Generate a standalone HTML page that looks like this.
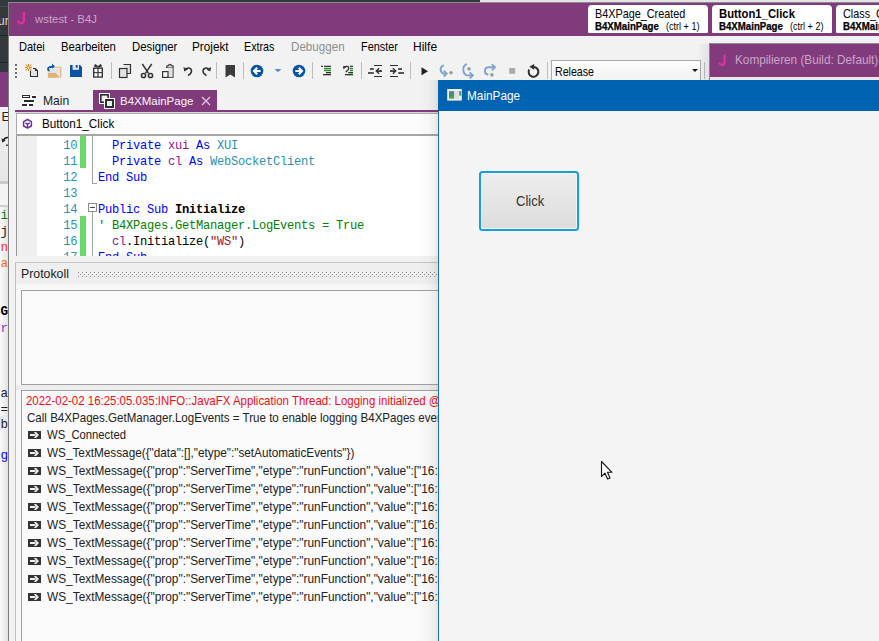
<!DOCTYPE html>
<html><head><meta charset="utf-8">
<style>
*{margin:0;padding:0;box-sizing:border-box}
html,body{width:879px;height:641px;overflow:hidden}
body{position:relative;background:#33383A;font-family:"Liberation Sans",sans-serif;font-size:12px;color:#000}
.a{position:absolute}
.t{position:absolute;white-space:nowrap;line-height:1}
.mono{font-family:"Liberation Mono",monospace;font-size:11.67px}
</style></head><body>
<div class="a" style="left:480px;top:0px;width:399px;height:2px;background:#E4E4E4"></div>
<div class="a" style="left:0px;top:6px;width:8px;height:1px;background:#484C50"></div>
<div class="t" style="left:-2px;top:15px;font-size:12px;color:#D8D8D8">ur</div>
<div class="a" style="left:0px;top:35px;width:8px;height:1px;background:#232629"></div>
<div class="a" style="left:0px;top:62px;width:8px;height:1px;background:#232629"></div>
<div class="a" style="left:0px;top:72px;width:8px;height:35px;background:#813B7D"></div>
<div class="a" style="left:0px;top:107px;width:8px;height:74px;background:linear-gradient(#F0F0F0,#E6E6E6)"></div>
<div class="t" style="left:1.5px;top:111px;font-size:12.5px;color:#222">E</div>
<svg class="a" style="left:0;top:134px" width="8" height="14"><path d="M8 3.6 C6 3.4 4.2 4.6 3.2 6.6" fill="none" stroke="#222" stroke-width="1.5"/><path d="M1.6 4.2 L2.2 8.4 L5.6 6.8 Z" fill="#222"/><rect x="6" y="10.5" width="2" height="1.5" fill="#444"/></svg>
<div class="a" style="left:0px;top:181px;width:8px;height:3px;background:#C9C9C9"></div>
<div class="a" style="left:0px;top:184px;width:8px;height:21px;background:#F4F4F4"></div>
<div class="a" style="left:0px;top:205px;width:8px;height:2px;background:#CFCFCF"></div>
<div class="a" style="left:0px;top:207px;width:8px;height:434px;background:linear-gradient(to right,#FAFAFA,#E2E2E2)"></div>
<div class="a" style="left:0px;top:416px;width:8px;height:14px;background:#E8E8E8"></div>
<div class="t mono" style="left:0.5px;top:210px;font-size:12.6px;color:#008000;">i</div>
<div class="t mono" style="left:0.5px;top:226px;font-size:12.6px;color:#222;">j</div>
<div class="t mono" style="left:0.5px;top:242px;font-size:12.6px;color:#F03010;">n</div>
<div class="t mono" style="left:0.5px;top:258px;font-size:12.6px;color:#F07010;">a</div>
<div class="t mono" style="left:0.5px;top:306px;font-size:12.6px;color:#000;font-weight:bold">G</div>
<div class="t mono" style="left:0.5px;top:323px;font-size:12.6px;color:#9030C0;">r</div>
<div class="t mono" style="left:0.5px;top:388px;font-size:12.6px;color:#222;">a</div>
<div class="t mono" style="left:0.5px;top:404px;font-size:12.6px;color:#222;">=</div>
<div class="t mono" style="left:0.5px;top:419px;font-size:12.6px;color:#222;">b</div>
<div class="t mono" style="left:0.5px;top:450px;font-size:12.6px;color:#0000FF;">g</div>
<div class="a" style="left:8px;top:2px;width:871px;height:639px;background:#F2F2F2;border-left:1px solid #7D7D7D;border-top:1px solid #8A8A8A"></div>
<div class="a" style="left:9px;top:3px;width:870px;height:33px;background:#813B7D"></div>
<svg class="a" style="left:14px;top:9px" width="16" height="18"><path d="M9.9 3 V11 C9.9 13.6 8.6 14.4 6.9 14.4 C5.3 14.4 4.5 13.4 4.2 11.6" fill="none" stroke="#E0309A" stroke-width="2.4"/></svg>
<div class="t" style="left:35px;top:14.19px;font-size:11.59px;color:#C9A5C8;transform:scaleX(0.9819);transform-origin:0 0;">wstest - B4J</div>
<div class="a" style="left:588px;top:5px;width:120px;height:28px;background:#fff;border-radius:4px 4px 1px 1px"></div>
<div class="t" style="left:594.5px;top:6.96px;font-size:13.04px;color:#000;transform:scaleX(0.8310);transform-origin:0 0;">B4XPage_Created</div>
<div class="t" style="left:594.5px;top:22.41px;font-size:10.14px;color:#000;font-weight:bold;transform:scaleX(0.9539);transform-origin:0 0;-webkit-text-stroke:0.25px #000;">B4XMainPage</div>
<div class="t" style="left:665.5px;top:22.43px;font-size:10.00px;color:#000;transform:scaleX(0.9066);transform-origin:0 0;">(ctrl + 1)</div>
<div class="a" style="left:712px;top:5px;width:120px;height:28px;background:#fff;border-radius:4px 4px 1px 1px"></div>
<div class="t" style="left:718.5px;top:6.96px;font-size:13.04px;color:#000;font-weight:bold;transform:scaleX(0.8666);transform-origin:0 0;">Button1_Click</div>
<div class="t" style="left:718.5px;top:22.41px;font-size:10.14px;color:#000;font-weight:bold;transform:scaleX(0.9539);transform-origin:0 0;-webkit-text-stroke:0.25px #000;">B4XMainPage</div>
<div class="t" style="left:789.5px;top:22.43px;font-size:10.00px;color:#000;transform:scaleX(0.9066);transform-origin:0 0;">(ctrl + 2)</div>
<div class="a" style="left:836px;top:5px;width:60px;height:28px;background:#fff;border-radius:4px 4px 1px 1px"></div>
<div class="t" style="left:842.5px;top:6.96px;font-size:13.04px;color:#000;transform:scaleX(0.8312);transform-origin:0 0;">Class_Globals</div>
<div class="t" style="left:842.5px;top:22.41px;font-size:10.14px;color:#000;font-weight:bold;transform:scaleX(0.9539);transform-origin:0 0;-webkit-text-stroke:0.25px #000;">B4XMainPage</div>
<div class="t" style="left:18.6px;top:39.96px;font-size:13.04px;color:#000;transform:scaleX(0.8473);transform-origin:0 0;">Datei</div>
<div class="t" style="left:60.8px;top:39.96px;font-size:13.04px;color:#000;transform:scaleX(0.8686);transform-origin:0 0;">Bearbeiten</div>
<div class="t" style="left:131.5px;top:39.96px;font-size:13.04px;color:#000;transform:scaleX(0.8697);transform-origin:0 0;">Designer</div>
<div class="t" style="left:192px;top:39.96px;font-size:13.04px;color:#000;transform:scaleX(0.9015);transform-origin:0 0;">Projekt</div>
<div class="t" style="left:244.1px;top:39.96px;font-size:13.04px;color:#000;transform:scaleX(0.8251);transform-origin:0 0;">Extras</div>
<div class="t" style="left:290.5px;top:39.96px;font-size:13.04px;color:#8E8E8E;transform:scaleX(0.8920);transform-origin:0 0;">Debuggen</div>
<div class="t" style="left:360.6px;top:39.96px;font-size:13.04px;color:#000;transform:scaleX(0.8345);transform-origin:0 0;">Fenster</div>
<div class="t" style="left:413.4px;top:39.96px;font-size:13.04px;color:#000;transform:scaleX(0.9236);transform-origin:0 0;">Hilfe</div>
<svg class="a" style="left:0;top:0" width="879" height="90" viewBox="0 0 879 90" shape-rendering="geometricPrecision">
 <!-- grip -->
 <g fill="#6E6E6E"><rect x="15" y="64" width="2" height="2"/><rect x="15" y="68" width="2" height="2"/><rect x="15" y="72" width="2" height="2"/><rect x="15" y="76" width="2" height="2"/></g>
 <!-- new -->
 <path d="M30.5 70.8 V76.5 H37.5 V70.8 L35.3 68.5 H33" fill="#E4E4E4" stroke="#2E2E2E" stroke-width="1.1"/>
 <path d="M35 68.3 L37.7 71 H35 Z" fill="#2E2E2E"/>
 <g stroke="#D5841A" stroke-width="1.2"><line x1="28.5" y1="64" x2="28.5" y2="65.8"/><line x1="28.5" y1="69.2" x2="28.5" y2="71"/><line x1="25" y1="67.5" x2="26.8" y2="67.5"/><line x1="30.2" y1="67.5" x2="32" y2="67.5"/></g>
 <g fill="#D5841A"><circle cx="26.2" cy="65.2" r="0.7"/><circle cx="30.8" cy="65.2" r="0.7"/><circle cx="26.2" cy="69.8" r="0.7"/><circle cx="30.8" cy="69.8" r="0.7"/></g>
 <circle cx="28.5" cy="67.5" r="1.5" fill="#fff" stroke="#D5841A" stroke-width="1.1"/>
 <!-- open -->
 <rect x="47.5" y="68.8" width="13" height="8.7" fill="#E2E2E2"/>
 <path d="M55 67.3 H60.8 V77.8" fill="none" stroke="#DFB372" stroke-width="1.1"/>
 <path d="M48 73 H55.5 L57 74.6 L58.5 76.2 L59.3 77.8 H48 Z" fill="#DFB372"/>
 <path d="M49.5 70.8 C47.5 70.2 47.6 67.8 49.6 67.2 C50.8 66.9 52 66.8 53.2 66.6" fill="none" stroke="#0A58A8" stroke-width="1.9"/>
 <path d="M52 63.6 L55 66.4 L52.3 68.8 Z" fill="#0A58A8"/>
 <!-- save -->
 <path d="M70 65 H80 L82 67 V77 H70 Z" fill="#0C52A2"/>
 <rect x="72.6" y="65" width="6.4" height="4.8" fill="#E6E4E2"/>
 <rect x="75.8" y="65" width="1.8" height="2.8" fill="#0C52A2"/>
 <!-- gift -->
 <rect x="93" y="67.5" width="10" height="10.2" fill="#333"/>
 <g fill="#fff"><rect x="94.4" y="68.9" width="3" height="3.2"/><rect x="98.6" y="68.9" width="3" height="3.2"/><rect x="94.4" y="73.2" width="3" height="3.2"/><rect x="98.6" y="73.2" width="3" height="3.2"/></g>
 <path d="M98 67.2 C96.5 63.8 94 63.8 94.6 66.6 Z M98 67.2 C99.5 63.8 102 63.8 101.4 66.6 Z" fill="#333" stroke="#333" stroke-width="0.8"/>
 <!-- sep -->
 <g fill="#BDBDBD"><rect x="111" y="62" width="1" height="17"/><rect x="216" y="62" width="1" height="17"/><rect x="243" y="62" width="1" height="17"/><rect x="312" y="62" width="1" height="17"/><rect x="361" y="62" width="1" height="17"/><rect x="410" y="62" width="1" height="17"/><rect x="547" y="62" width="1" height="17"/><rect x="704" y="62" width="1" height="17"/></g>
 <!-- copy -->
 <path d="M123.5 64.5 H130.5 V73.5 H127" fill="#E2E2E2" stroke="#333" stroke-width="1.2"/>
 <rect x="119.5" y="68.5" width="7.5" height="9" fill="#E2E2E2" stroke="#333" stroke-width="1.2"/>
 <!-- scissors -->
 <g fill="none" stroke="#333" stroke-width="1.5"><path d="M142.3 64 L148.6 73.3 M151.7 64 L145.4 73.3"/><circle cx="143.5" cy="75.5" r="2.1"/><circle cx="150.5" cy="75.5" r="2.1"/></g>
 <!-- paste -->
 <path d="M166 67.3 H173 V77.2 H167.5" fill="none" stroke="#333" stroke-width="1.2"/>
 <rect x="168" y="68" width="4.5" height="8.8" fill="#E2E2E2"/>
 <path d="M167 67.6 V65.8 H168.6 A1.4 1.4 0 0 1 171.4 65.8 H173 V67.6" fill="#E2E2E2" stroke="#333" stroke-width="1.1"/>
 <rect x="162.6" y="71.6" width="5.4" height="5.8" fill="#F8F8F8" stroke="#333" stroke-width="1.2"/>
 <!-- undo -->
 <path d="M185.2 69.8 C187 67 191.5 67.3 191.5 71 C191.5 73.3 190 74.5 188 75.5" fill="none" stroke="#333" stroke-width="1.5"/>
 <path d="M183.5 67 L184.2 71.5 L188 69.5 Z" fill="#333"/>
 <!-- redo -->
 <path d="M209.3 70 C207.5 67.2 203 67.5 203 71 C203 73.3 204.5 74.5 206.5 75.5" fill="none" stroke="#333" stroke-width="1.5"/>
 <path d="M211 67 L210.3 71.5 L206.5 69.5 Z" fill="#333"/>
 <!-- bookmark -->
 <path d="M225.5 65 H235 V77.5 L230.25 74.5 L225.5 77.5 Z" fill="#3C3C3C"/>
 <!-- back -->
 <circle cx="257" cy="71" r="6.3" fill="#0B54A2"/>
 <path d="M260.6 71 H254.5 M257.2 67.8 L254 71 L257.2 74.2" fill="none" stroke="#fff" stroke-width="2"/>
 <path d="M274.6 69 H281.4 L278 72.2 Z" fill="#5C8AC8"/>
 <!-- forward -->
 <circle cx="299" cy="71" r="6.3" fill="#0B54A2"/>
 <path d="M295.4 71 H301.5 M298.8 67.8 L302 71 L298.8 74.2" fill="none" stroke="#fff" stroke-width="2"/>
 <!-- indent 1 -->
 <g fill="#2E2E2E"><rect x="321" y="65.7" width="2" height="1.2"/><rect x="324" y="65.7" width="7" height="1.2"/><rect x="326" y="72" width="5" height="1.3"/><rect x="323" y="74" width="8" height="1.3"/></g>
 <g fill="#2A8A2A"><rect x="324" y="67.8" width="7" height="1.4"/><rect x="324" y="69.8" width="7" height="1.4"/></g>
 <!-- indent 2 -->
 <g fill="#2E2E2E"><rect x="350" y="65.7" width="3" height="1.2"/><rect x="348.3" y="72" width="4.7" height="1.3"/><rect x="345" y="74" width="8" height="1.3"/></g>
 <g fill="#2A8A2A"><rect x="350" y="67.8" width="3" height="1.4"/><rect x="350" y="69.8" width="3" height="1.4"/></g>
 <path d="M344.5 67.5 C346 65.8 348.8 66.2 348.8 68.3 C348.8 69.8 347.3 70.8 345.8 72" fill="none" stroke="#2E2E2E" stroke-width="1.3"/>
 <path d="M343 66 L346.5 66.5 L343.5 69.5 Z" fill="#2E2E2E"/>
 <!-- outdent 1 -->
 <g fill="#2E2E2E"><rect x="374" y="65" width="8" height="1"/><rect x="374" y="76" width="8" height="1"/><rect x="370" y="68.2" width="3.8" height="1.6"/><rect x="368" y="72.2" width="5.8" height="1.6"/>
 <rect x="377" y="70.2" width="5" height="1.7"/><path d="M375.2 71 L378.8 67.8 L379.6 68.8 L377.2 71 L379.6 73.2 L378.8 74.2 Z"/></g>
 <!-- outdent 2 -->
 <g fill="#2E2E2E"><rect x="390" y="65" width="8" height="1"/><rect x="390" y="76" width="8" height="1"/><rect x="398.2" y="68.2" width="3.8" height="1.6"/><rect x="398.2" y="72.2" width="5.8" height="1.6"/>
 <rect x="390" y="70.2" width="5" height="1.7"/><path d="M396.8 71 L393.2 67.8 L392.4 68.8 L394.8 71 L392.4 73.2 L393.2 74.2 Z"/></g>
 <!-- play -->
 <path d="M421.5 67.2 L428 71.2 L421.5 75.2 Z" fill="#222"/>
 <!-- step over -->
 <g fill="none" stroke="#7BA4D0" stroke-width="1.9" stroke-linecap="round"><path d="M443.2 65.6 C439.8 66.8 439.6 72.3 443.5 73.6 H446"/><path d="M444.3 71.2 L446.6 73.6 L444.3 76"/></g>
 <circle cx="451" cy="72.7" r="1.8" fill="#9C9C9C"/>
 <!-- step into -->
 <g fill="none" stroke="#7BA4D0" stroke-width="1.9" stroke-linecap="round"><path d="M466.3 64.3 C462.2 65.8 462.3 74 467 75.4 H472.3"/><path d="M470.3 73 L472.8 75.4 L470.3 77.8"/></g>
 <circle cx="469" cy="68.9" r="1.8" fill="#9C9C9C"/>
 <!-- step out -->
 <g fill="none" stroke="#7BA4D0" stroke-width="1.9" stroke-linecap="round"><path d="M487.6 74.5 C483.6 73.4 484.2 67.3 488.5 67.3 H494.8"/><path d="M492.4 64.9 L494.9 67.3 L492.4 69.7"/></g>
 <circle cx="491.9" cy="74.9" r="1.8" fill="#9C9C9C"/>
 <!-- stop -->
 <rect x="509.2" y="68" width="6" height="5.8" fill="#ABABAB"/>
 <!-- restart -->
 <path d="M533.3 66.9 A4.9 4.9 0 1 1 529.2 69.4" fill="none" stroke="#2E2E2E" stroke-width="2"/>
 <path d="M529.2 66.8 L534.2 63.9 L534.2 69.7 Z" fill="#2E2E2E"/>
</svg>
<div class="a" style="left:551px;top:60px;width:150px;height:24px;background:linear-gradient(#FDFDFD,#F1F1F1);border:1px solid #ABABAB"></div>
<div class="t" style="left:555px;top:64.96px;font-size:13.04px;color:#000;transform:scaleX(0.8149);transform-origin:0 0;">Release</div>
<svg class="a" style="left:690px;top:66px" width="10" height="8"><path d="M2 3 H8 L5 6 Z" fill="#111"/></svg>
<div class="a" style="left:93px;top:90px;width:124px;height:21px;background:#813B7D"></div>
<div class="a" style="left:15px;top:110px;width:424px;height:2px;background:#813B7D"></div>
<div class="t" style="left:42.5px;top:93.96px;font-size:13.04px;color:#1E1E1E;transform:scaleX(0.9302);transform-origin:0 0;">Main</div>
<div class="t" style="left:120.4px;top:95.80px;font-size:10.87px;color:#FBF8FB;transform:scaleX(1.0577);transform-origin:0 0;">B4XMainPage</div>
<svg class="a" style="left:200px;top:95px" width="12" height="12"><path d="M2 2 L10 10 M10 2 L2 10" stroke="#DCCCDC" stroke-width="1.2"/></svg>
<svg class="a" style="left:19px;top:91px" width="20" height="18">
<g fill="#fff"><rect x="2" y="3" width="10" height="5"/><rect x="12" y="4" width="6" height="4"/><rect x="4" y="8" width="12" height="4"/><rect x="2" y="12" width="13" height="4"/></g>
<rect x="3.5" y="4.5" width="7" height="2" fill="#fff" stroke="#2A2A2A" stroke-width="1"/><rect x="13" y="5" width="4" height="2" fill="#2A2A2A"/>
<rect x="5" y="9" width="10" height="2" fill="#2A2A2A"/>
<rect x="3" y="13" width="5" height="2" fill="#2A2A2A"/><rect x="10" y="13" width="4" height="2" fill="#2A2A2A"/></svg>
<svg class="a" style="left:95px;top:90px" width="22" height="21">
<rect x="4" y="3" width="11" height="11" fill="#fff"/><rect x="5" y="4" width="9" height="9" fill="#2E2E2E"/><rect x="6.6" y="5.6" width="5.8" height="5.8" fill="#EEE"/>
<rect x="9" y="8" width="11" height="11" fill="#fff"/><rect x="10" y="9" width="9" height="9" fill="#2E2E2E"/><rect x="12" y="11" width="5" height="5" fill="#EEE"/></svg>
<div class="a" style="left:15px;top:112px;width:424px;height:1px;background:#D8D8D8"></div>
<div class="a" style="left:16px;top:113px;width:423px;height:23px;background:#FCFCFC;border:1px solid #ABABAB;border-bottom:2px solid #A6A6A6"></div>
<svg class="a" style="left:21px;top:117px" width="13" height="14"><path d="M6.5 2.5 L10.4 4.7 V9 L6.5 11.1 L2.6 9 V4.7 Z M4.4 5.9 L6.5 7.2 L8.6 5.9 M6.5 7.2 V11.1" fill="none" stroke="#6B2FAA" stroke-width="1.45" stroke-linejoin="round"/></svg>
<div class="t" style="left:41.5px;top:116.96px;font-size:13.04px;color:#000;transform:scaleX(0.8984);transform-origin:0 0;">Button1_Click</div>
<div class="a" style="left:16px;top:136px;width:423px;height:120px;background:#fff;border-left:1px solid #969696"></div>
<div class="a" style="left:17px;top:136px;width:20px;height:120px;background:#EFEFEF"></div>
<div class="a" style="left:80px;top:136px;width:6px;height:32px;background:#6AD96A"></div>
<div class="a" style="left:80px;top:216px;width:6px;height:40px;background:#6AD96A"></div>
<div class="a" style="left:92px;top:136px;width:1px;height:48px;background:#A0A0A0"></div>
<div class="a" style="left:92px;top:183px;width:5px;height:1px;background:#A0A0A0"></div>
<div class="a" style="left:92px;top:212px;width:1px;height:44px;background:#A0A0A0"></div>
<div class="a" style="left:88px;top:203px;width:9px;height:9px;border:1px solid #8A8A8A;background:#fff"></div>
<div class="a" style="left:90px;top:207px;width:5px;height:1px;background:#444"></div>
<div class="a mono" style="left:0;top:136px;width:439px;height:120px;overflow:hidden;line-height:16px;font-size:12.1px;letter-spacing:-0.26px">
<div class="a" style="left:40px;top:1.6px;width:37.3px;text-align:right;color:#2B91AF">10<br>11<br>12<br>13<br>14<br>15<br>16<br>17</div>
<div class="a" style="left:98px;top:1.6px;white-space:pre;color:#000"><span style="color:#0000FF">  Private </span><span style="color:#8B1A8B">xui</span><span style="color:#0000FF"> As </span><span style="color:#2B91AF">XUI</span>
<span style="color:#0000FF">  Private </span><span style="color:#8B1A8B">cl</span><span style="color:#0000FF"> As </span><span style="color:#2B91AF">WebSocketClient</span>
<span style="color:#0000FF">End Sub</span>

<span style="color:#0000FF">Public Sub </span><b>Initialize</b>
<span style="color:#008000">' B4XPages.GetManager.LogEvents = True</span>
  <span style="color:#8B1A8B">cl</span>.Initialize(<span style="color:#A31515">"WS"</span>)
<span style="color:#0000FF">End Sub</span></div>
</div>
<div class="a" style="left:15px;top:262px;width:424px;height:379px;background:#F7F7F7;border-left:1px solid #BDBDBD;border-top:1px solid #C4C4C4"></div>
<div class="a" style="left:16px;top:263px;width:423px;height:21px;background:#EFEFEF"></div>
<div class="t" style="left:21px;top:266.96px;font-size:13.04px;color:#222;transform:scaleX(0.9458);transform-origin:0 0;">Protokoll</div>
<svg class="a" style="left:78px;top:272px" width="361" height="5"><defs><pattern id="dp" width="4" height="4" patternUnits="userSpaceOnUse"><rect x="0" y="0" width="1" height="1" fill="#8C8C8C"/><rect x="2" y="2" width="1" height="1" fill="#8C8C8C"/></pattern></defs><rect width="361" height="5" fill="url(#dp)"/></svg>
<div class="a" style="left:21px;top:290px;width:418px;height:95px;background:#FAFAFA;border:1px solid #A0A0A0;border-right:none"></div>
<div class="a" style="left:16px;top:385px;width:423px;height:5px;background:#ECECEC"></div>
<div class="a" style="left:21px;top:390px;width:418px;height:251px;background:#FAFAFA;border-left:1px solid #A0A0A0;border-top:1px solid #A0A0A0"></div>
<div class="a" style="left:0;top:0;width:438px;height:641px;overflow:hidden">
<div class="t" style="left:25.9px;top:393.96px;font-size:13.04px;color:#F00A14;transform:scaleX(0.8789);transform-origin:0 0">2022-02-02 16:25:05.035:INFO::JavaFX Application Thread: Logging initialized @2263ms</div>
<div class="t" style="left:26.7px;top:410.96px;font-size:13.04px;color:#222;transform:scaleX(0.8878);transform-origin:0 0">Call B4XPages.GetManager.LogEvents = True to enable logging B4XPages events.</div>
<svg class="a" style="left:28px;top:431px" width="13" height="8"><rect width="13" height="8" fill="#333"/><rect x="2" y="3" width="5.5" height="2" fill="#F2F2F2"/><path d="M5.9 1 H8 L11 4 L8 7 H5.9 L8.3 4 Z" fill="#F2F2F2"/></svg>
<div class="t" style="left:47.4px;top:427.96px;font-size:13.04px;color:#222;transform:scaleX(0.8647);transform-origin:0 0">WS_Connected</div>
<svg class="a" style="left:28px;top:449px" width="13" height="8"><rect width="13" height="8" fill="#333"/><rect x="2" y="3" width="5.5" height="2" fill="#F2F2F2"/><path d="M5.9 1 H8 L11 4 L8 7 H5.9 L8.3 4 Z" fill="#F2F2F2"/></svg>
<div class="t" style="left:47.4px;top:445.96px;font-size:13.04px;color:#222;transform:scaleX(0.9021);transform-origin:0 0">WS_TextMessage({&quot;data&quot;:[],&quot;etype&quot;:&quot;setAutomaticEvents&quot;})</div>
<svg class="a" style="left:28px;top:467px" width="13" height="8"><rect width="13" height="8" fill="#333"/><rect x="2" y="3" width="5.5" height="2" fill="#F2F2F2"/><path d="M5.9 1 H8 L11 4 L8 7 H5.9 L8.3 4 Z" fill="#F2F2F2"/></svg>
<div class="t" style="left:47.4px;top:463.96px;font-size:13.04px;color:#222;transform:scaleX(0.9103);transform-origin:0 0">WS_TextMessage({&quot;prop&quot;:&quot;ServerTime&quot;,&quot;etype&quot;:&quot;runFunction&quot;,&quot;value&quot;:[&quot;16:25:10&quot;]})</div>
<svg class="a" style="left:28px;top:485px" width="13" height="8"><rect width="13" height="8" fill="#333"/><rect x="2" y="3" width="5.5" height="2" fill="#F2F2F2"/><path d="M5.9 1 H8 L11 4 L8 7 H5.9 L8.3 4 Z" fill="#F2F2F2"/></svg>
<div class="t" style="left:47.4px;top:481.96px;font-size:13.04px;color:#222;transform:scaleX(0.9103);transform-origin:0 0">WS_TextMessage({&quot;prop&quot;:&quot;ServerTime&quot;,&quot;etype&quot;:&quot;runFunction&quot;,&quot;value&quot;:[&quot;16:25:10&quot;]})</div>
<svg class="a" style="left:28px;top:503px" width="13" height="8"><rect width="13" height="8" fill="#333"/><rect x="2" y="3" width="5.5" height="2" fill="#F2F2F2"/><path d="M5.9 1 H8 L11 4 L8 7 H5.9 L8.3 4 Z" fill="#F2F2F2"/></svg>
<div class="t" style="left:47.4px;top:499.96px;font-size:13.04px;color:#222;transform:scaleX(0.9103);transform-origin:0 0">WS_TextMessage({&quot;prop&quot;:&quot;ServerTime&quot;,&quot;etype&quot;:&quot;runFunction&quot;,&quot;value&quot;:[&quot;16:25:10&quot;]})</div>
<svg class="a" style="left:28px;top:521px" width="13" height="8"><rect width="13" height="8" fill="#333"/><rect x="2" y="3" width="5.5" height="2" fill="#F2F2F2"/><path d="M5.9 1 H8 L11 4 L8 7 H5.9 L8.3 4 Z" fill="#F2F2F2"/></svg>
<div class="t" style="left:47.4px;top:517.96px;font-size:13.04px;color:#222;transform:scaleX(0.9103);transform-origin:0 0">WS_TextMessage({&quot;prop&quot;:&quot;ServerTime&quot;,&quot;etype&quot;:&quot;runFunction&quot;,&quot;value&quot;:[&quot;16:25:10&quot;]})</div>
<svg class="a" style="left:28px;top:539px" width="13" height="8"><rect width="13" height="8" fill="#333"/><rect x="2" y="3" width="5.5" height="2" fill="#F2F2F2"/><path d="M5.9 1 H8 L11 4 L8 7 H5.9 L8.3 4 Z" fill="#F2F2F2"/></svg>
<div class="t" style="left:47.4px;top:535.96px;font-size:13.04px;color:#222;transform:scaleX(0.9103);transform-origin:0 0">WS_TextMessage({&quot;prop&quot;:&quot;ServerTime&quot;,&quot;etype&quot;:&quot;runFunction&quot;,&quot;value&quot;:[&quot;16:25:10&quot;]})</div>
<svg class="a" style="left:28px;top:557px" width="13" height="8"><rect width="13" height="8" fill="#333"/><rect x="2" y="3" width="5.5" height="2" fill="#F2F2F2"/><path d="M5.9 1 H8 L11 4 L8 7 H5.9 L8.3 4 Z" fill="#F2F2F2"/></svg>
<div class="t" style="left:47.4px;top:553.96px;font-size:13.04px;color:#222;transform:scaleX(0.9103);transform-origin:0 0">WS_TextMessage({&quot;prop&quot;:&quot;ServerTime&quot;,&quot;etype&quot;:&quot;runFunction&quot;,&quot;value&quot;:[&quot;16:25:10&quot;]})</div>
<svg class="a" style="left:28px;top:575px" width="13" height="8"><rect width="13" height="8" fill="#333"/><rect x="2" y="3" width="5.5" height="2" fill="#F2F2F2"/><path d="M5.9 1 H8 L11 4 L8 7 H5.9 L8.3 4 Z" fill="#F2F2F2"/></svg>
<div class="t" style="left:47.4px;top:571.96px;font-size:13.04px;color:#222;transform:scaleX(0.9103);transform-origin:0 0">WS_TextMessage({&quot;prop&quot;:&quot;ServerTime&quot;,&quot;etype&quot;:&quot;runFunction&quot;,&quot;value&quot;:[&quot;16:25:10&quot;]})</div>
<svg class="a" style="left:28px;top:593px" width="13" height="8"><rect width="13" height="8" fill="#333"/><rect x="2" y="3" width="5.5" height="2" fill="#F2F2F2"/><path d="M5.9 1 H8 L11 4 L8 7 H5.9 L8.3 4 Z" fill="#F2F2F2"/></svg>
<div class="t" style="left:47.4px;top:589.96px;font-size:13.04px;color:#222;transform:scaleX(0.9103);transform-origin:0 0">WS_TextMessage({&quot;prop&quot;:&quot;ServerTime&quot;,&quot;etype&quot;:&quot;runFunction&quot;,&quot;value&quot;:[&quot;16:25:10&quot;]})</div>
</div>
<div class="a" style="left:697px;top:44px;width:12px;height:36px;background:linear-gradient(to right,rgba(0,0,0,0),rgba(0,0,0,0.07))"></div>
<div class="a" style="left:709px;top:43px;width:170px;height:40px;background:#E9E9E9;border-left:1px solid #8A8A8A;border-top:1px solid #8A8A8A"></div>
<div class="a" style="left:710px;top:44px;width:169px;height:33px;background:#813B7D"></div>
<svg class="a" style="left:715px;top:52px" width="16" height="16"><path d="M9.6 2.6 V9.8 C9.6 12.2 8.4 12.9 6.8 12.9 C5.3 12.9 4.6 12 4.3 10.4" fill="none" stroke="#E0309A" stroke-width="2.2"/></svg>
<div class="a" style="left:710px;top:44px;width:169px;height:32px;overflow:hidden">
<div class="t" style="left:25px;top:8.96px;font-size:13.04px;color:#C9A5C8;transform:scaleX(0.9033);transform-origin:0 0;">Kompilieren (Build: Default)</div>
</div>
<div class="a" style="left:418px;top:80px;width:20px;height:561px;background:linear-gradient(to right,rgba(60,40,20,0) 0,rgba(60,40,20,0.025) 50%,rgba(60,40,20,0.06) 80%,rgba(60,40,20,0.11) 100%)"></div>
<div class="a" style="left:438px;top:80px;width:441px;height:561px;background:#F4F4F4;border-left:1px solid #1A6FBA"></div>
<div class="a" style="left:438px;top:80px;width:441px;height:31px;background:#0063B1"></div>
<svg class="a" style="left:446px;top:88px" width="17" height="14"><defs><linearGradient id="gg" x1="0" y1="0" x2="0" y2="1"><stop offset="0" stop-color="#6B86C2"/><stop offset="0.45" stop-color="#3F8C6E"/><stop offset="1" stop-color="#55B060"/></linearGradient></defs>
<rect x="1.2" y="1" width="14.6" height="11.6" fill="#F3EFEC"/>
<rect x="3" y="3" width="5.2" height="7.8" fill="url(#gg)"/>
<rect x="9" y="3" width="3.8" height="8" fill="#E0E0E0"/>
<rect x="13.2" y="3" width="2" height="4.8" fill="url(#gg)"/></svg>
<div class="t" style="left:467.4px;top:88.96px;font-size:13.04px;color:#FFFFFF;transform:scaleX(0.9057);transform-origin:0 0;">MainPage</div>
<div class="a" style="left:479px;top:171px;width:100px;height:60px;border:2px solid #16A0DA;border-radius:3.5px;background:linear-gradient(#EEEEEE,#DCDCDC);box-shadow:inset 0 0 0 1px #F4F4F4"></div>
<div class="t" style="left:515.5px;top:193.73px;font-size:14.49px;color:#333;transform:scaleX(0.8981);transform-origin:0 0;">Click</div>
<svg class="a" style="left:600px;top:460px" width="14" height="22"><path d="M1.5 1.5 V16.5 L5 13.2 L7.6 19 L10 18 L7.5 12.3 L12 12.3 Z" fill="#fff" stroke="#111" stroke-width="1.1" stroke-linejoin="round"/></svg>
</body></html>
